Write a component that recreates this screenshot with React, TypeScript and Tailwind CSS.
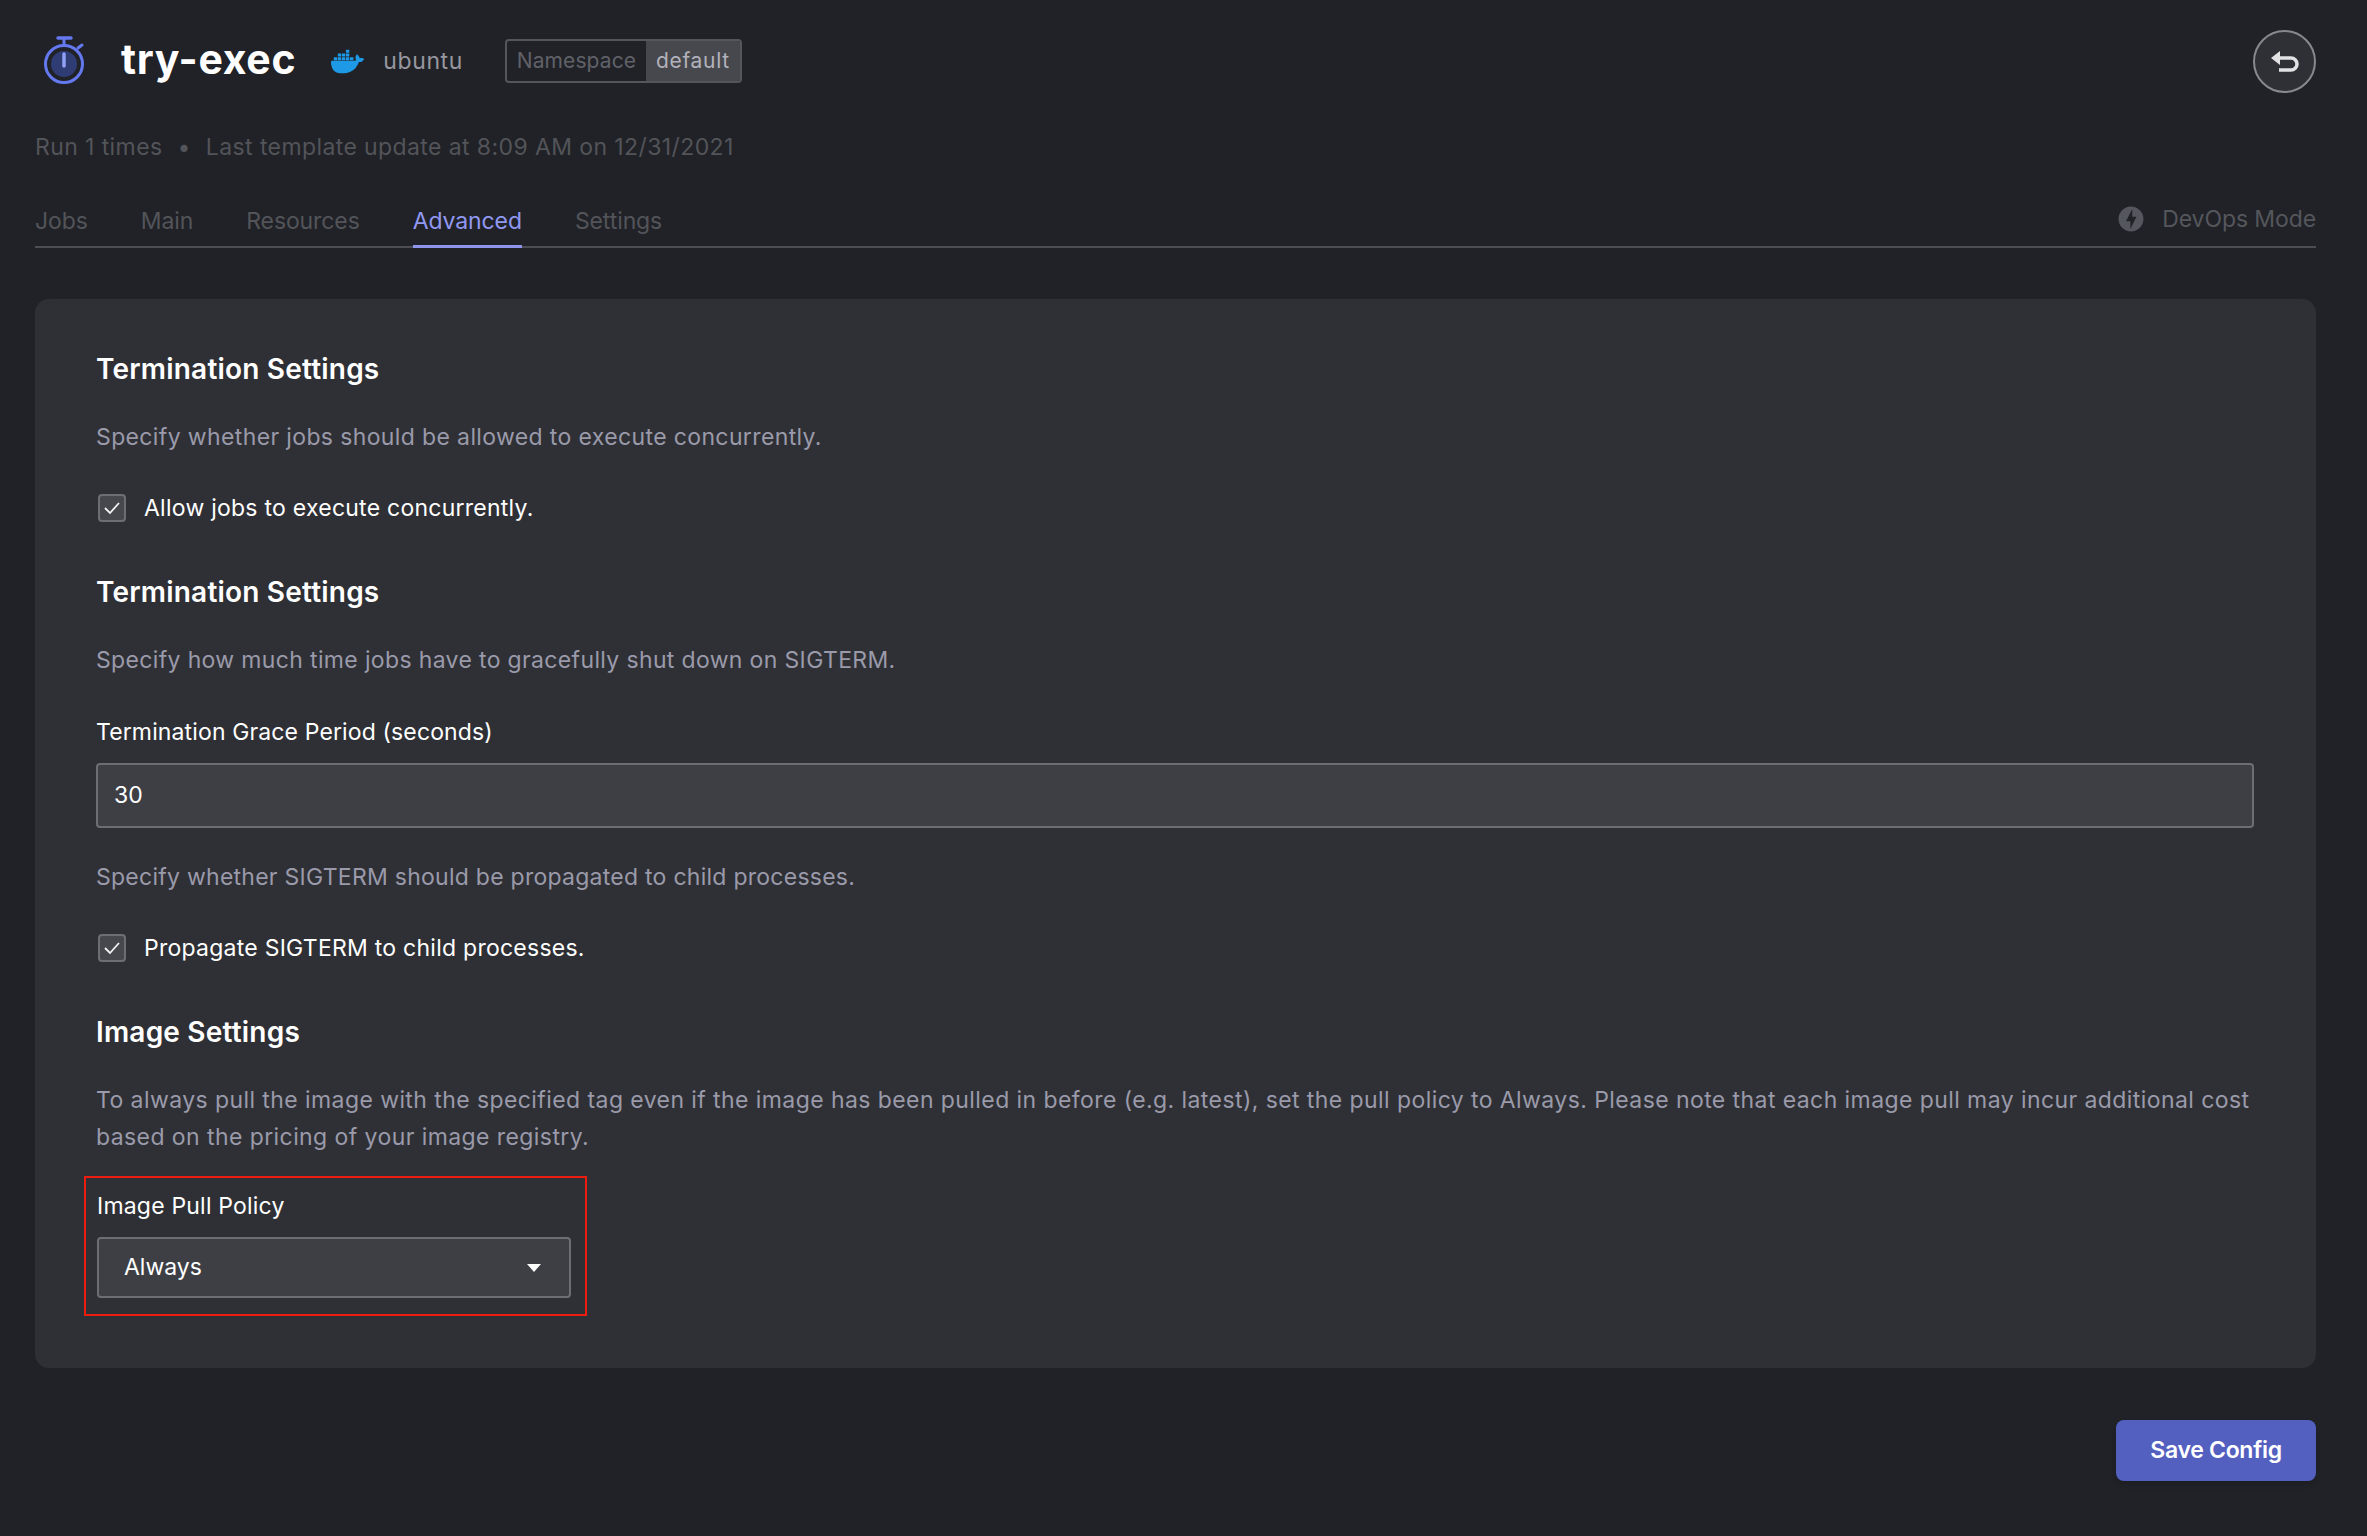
import { SiDocker } from 'react-icons/si';
import { MdOfflineBolt } from 'react-icons/md';

const tabs = ['Jobs', 'Main', 'Resources', 'Advanced', 'Settings'];

function Stopwatch() {
  return (
    <svg width="46" height="50" viewBox="0 0 46 50" fill="none">
      <path d="M17 3h13" stroke="#6478f0" strokeWidth="3.5" strokeLinecap="round" />
      <path d="M23 3v6" stroke="#6478f0" strokeWidth="3" />
      <path d="M37 13l4-3" stroke="#6478f0" strokeWidth="3" strokeLinecap="round" />
      <circle cx="23" cy="29" r="18.5" stroke="#6478f0" strokeWidth="3" />
      <circle cx="23" cy="29" r="13" fill="#303c74" />
      <path d="M23 19v12" stroke="#8fa0f5" strokeWidth="3.5" strokeLinecap="round" />
    </svg>
  );
}

function UndoIcon() {
  return (
    <svg width="28" height="21" viewBox="0 0 28 21" fill="none">
      <path d="M0 7l9-7v14z" fill="#e2e2e4" />
      <path d="M8 7h12a6 6 0 0 1 0 12H8" stroke="#e2e2e4" strokeWidth="3.5" />
    </svg>
  );
}

function Heading({ children, className = '' }: { children: React.ReactNode; className?: string }) {
  return <h2 className={`text-[28px] leading-[36px] font-semibold tracking-[0.2px] text-white ${className}`}>{children}</h2>;
}

function Desc({ children, className = '' }: { children: React.ReactNode; className?: string }) {
  return <p className={`text-[23px] leading-[37px] text-[#9a9aaa] ${className}`}>{children}</p>;
}

function Check({ label, className = '' }: { label: string; className?: string }) {
  return (
    <label className={`flex items-center h-[34px] ${className}`}>
      <span className="ml-[2px] w-[28px] h-[28px] rounded-[4px] border-2 border-[#6d6e75] bg-[#47484e] flex items-center justify-center">
        <svg width="18" height="14" viewBox="0 0 18 14" fill="none">
          <path d="M2 7l5 5 9-10" stroke="#f2f2f2" strokeWidth="1.8" />
        </svg>
      </span>
      <span className="ml-[18px] text-[23px] tracking-[0.25px] text-white">{label}</span>
    </label>
  );
}

export default function App() {
  return (
    <div className="min-h-[1536px] bg-[#202227] pl-[35px] pr-[51px] pt-[30px] font-['Inter',sans-serif]">
      {/* Header */}
      <div className="flex items-center h-[62px]">
        <div className="ml-[6px] -mt-[2px] w-[46px]">
          <Stopwatch />
        </div>
        <h1 className="ml-[34px] text-[41px] font-bold leading-none text-white -mt-[4px] tracking-[0.7px]">try-exec</h1>
        <SiDocker className="ml-[35px] text-[#1d99e6]" size={33} />
        <span className="ml-[19px] text-[23px] text-[#97979f] tracking-[0.6px]">ubuntu</span>
        <div className="ml-[42px] flex h-[44px] rounded-[4px] border-2 border-[#55565c] text-[21px] overflow-hidden">
          <span className="w-[139px] flex items-center justify-center text-[#606168] tracking-[0.1px]">Namespace</span>
          <span className="w-[94px] bg-[#47484d] flex items-center justify-center text-[#b2b2bc] tracking-[0.7px]">default</span>
        </div>
        <button className="ml-auto w-[63px] h-[63px] rounded-full border-2 border-[#88898e] bg-[#2f3035] flex items-center justify-center">
          <UndoIcon />
        </button>
      </div>

      {/* Meta line */}
      <div className="mt-[40px] flex text-[23px] leading-[30px] text-[#535459] tracking-[0.4px]">
        <span>Run 1 times</span>
        <span className="mx-[15px]">•</span>
        <span>Last template update at 8:09 AM on 12/31/2021</span>
      </div>

      {/* Tabs */}
      <div className="mt-[38px] flex justify-between border-b-2 border-[#4c4d53] h-[48px]">
        <div className="flex gap-[53px] tracking-[-0.1px]">
          {tabs.map((t) => (
            <div
              key={t}
              className={`h-[48px] pt-[6px] text-[23px] leading-[30px] ${
                t === 'Advanced' ? 'border-b-[3px] border-[#8f94ec] text-[#9198f2]' : 'text-[#535459]'
              }`}
            >
              {t}
            </div>
          ))}
        </div>
        <div className="flex items-start pt-[4px] text-[23px] leading-[30px] tracking-[-0.1px] text-[#55565c]">
          <MdOfflineBolt size={30} className="text-[#55575f]" />
          <span className="ml-[16px]">DevOps Mode</span>
        </div>
      </div>

      {/* Card */}
      <div className="mt-[51px] h-[1069px] rounded-[14px] bg-[#2f3035] pl-[61px] pr-[62px] pt-[52px]">
        <Heading>Termination Settings</Heading>
        <Desc className="mt-[32px] tracking-[0.37px]">Specify whether jobs should be allowed to execute concurrently.</Desc>
        <Check className="mt-[35px]" label="Allow jobs to execute concurrently." />

        <Heading className="mt-[49px]">Termination Settings</Heading>
        <Desc className="mt-[32px] tracking-[0.35px]">Specify how much time jobs have to gracefully shut down on SIGTERM.</Desc>
        <div className="mt-[38px] text-[23px] leading-[30px] tracking-[0.13px] text-white">Termination Grace Period (seconds)</div>
        <div className="mt-[16px] h-[65px] rounded-[4px] border-2 border-[#6d6e75] bg-[#3e3f45] px-[16px] flex items-center text-[23px] text-white">
          30
        </div>
        <Desc className="mt-[31px] tracking-[0.26px]">Specify whether SIGTERM should be propagated to child processes.</Desc>
        <Check className="mt-[35px]" label="Propagate SIGTERM to child processes." />

        <Heading className="mt-[49px]">Image Settings</Heading>
        <Desc className="mt-[32px] tracking-[0.42px]">
          To always pull the image with the specified tag even if the image has been pulled in before (e.g. latest), set the pull policy to
          Always. Please note that each image pull may incur additional cost based on the pricing of your image registry.
        </Desc>

        {/* Annotated field */}
        <div className="mt-[20px] -ml-[12px] w-[503px] h-[140px] border-2 border-[#ee1c0e] pl-[11px] pt-[13px]">
          <div className="text-[23px] leading-[30px] tracking-[0.2px] text-white">Image Pull Policy</div>
          <div className="mt-[16px] w-[474px] h-[61px] rounded-[4px] border-2 border-[#6d6e75] bg-[#3e3f45] pl-[25px] pr-[28px] flex items-center justify-between text-[23px] text-white">
            <span>Always</span>
            <span className="w-0 h-0 border-x-[7px] border-x-transparent border-t-[8px] border-t-white" />
          </div>
        </div>
      </div>

      {/* Footer */}
      <div className="mt-[52px] flex justify-end">
        <button className="w-[200px] h-[61px] rounded-[8px] bg-[#5460c0] text-[23px] font-semibold tracking-[-0.3px] text-white shadow-md">Save Config</button>
      </div>
    </div>
  );
}
